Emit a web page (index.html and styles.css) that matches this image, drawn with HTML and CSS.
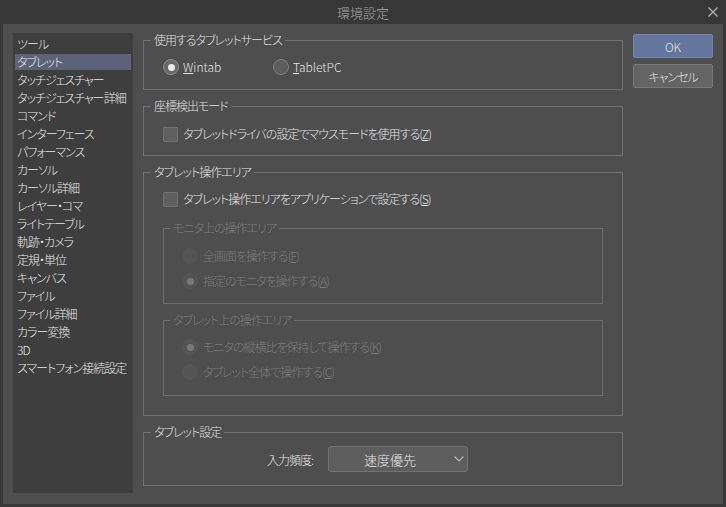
FILE: index.html
```html
<!DOCTYPE html>
<html lang="ja">
<head>
  <meta charset="UTF-8" />
  <title>環境設定</title>
  <link rel="stylesheet" href="styles.css">
</head>
<body>
  <div class="window">
    <div class="titlebar">
      <span class="title">環境設定</span>
      <svg class="close" width="10" height="10" viewBox="0 0 10 10">
        <path d="M0.5 0.5 L9.5 9.5 M9.5 0.5 L0.5 9.5" stroke="#b4b4b4" stroke-width="1.2" fill="none" />
      </svg>
    </div>

    <div class="main">
      <ul class="sidebar">
        <li>ツール</li>
        <li class="active">タブレット</li>
        <li>タッチジェスチャー</li>
        <li>タッチジェスチャー詳細</li>
        <li>コマンド</li>
        <li>インターフェース</li>
        <li>パフォーマンス</li>
        <li>カーソル</li>
        <li>カーソル詳細</li>
        <li>レイヤー・コマ</li>
        <li>ライトテーブル</li>
        <li>軌跡・カメラ</li>
        <li>定規・単位</li>
        <li>キャンバス</li>
        <li>ファイル</li>
        <li>ファイル詳細</li>
        <li>カラー変換</li>
        <li>3D</li>
        <li>スマートフォン接続設定</li>
      </ul>

      <div class="content">
        <div class="group g-service">
          <span class="legend">使用するタブレットサービス</span>
          <div class="row first">
            <label class="option"><span class="radio checked"></span><span class="latin"><u>W</u>intab</span></label>
            <label class="option"><span class="radio"></span><span class="latin"><u>T</u>abletPC</span></label>
          </div>
        </div>

        <div class="group g-mode">
          <span class="legend">座標検出モード</span>
          <div class="row first">
            <span class="check"></span>タブレットドライバの設定でマウスモードを使用する(<u>Z</u>)
          </div>
        </div>

        <div class="group g-area">
          <span class="legend">タブレット操作エリア</span>
          <div class="row first">
            <span class="check"></span>タブレット操作エリアをアプリケーションで設定する(<u>S</u>)
          </div>

          <div class="group sub disabled">
            <span class="legend">モニタ上の操作エリア</span>
            <div class="row first"><span class="radio"></span>全画面を操作する(<u>F</u>)</div>
            <div class="row"><span class="radio checked"></span>指定のモニタを操作する(<u>A</u>)</div>
          </div>

          <div class="group sub disabled last">
            <span class="legend">タブレット上の操作エリア</span>
            <div class="row first"><span class="radio checked"></span>モニタの縦横比を保持して操作する(<u>K</u>)</div>
            <div class="row"><span class="radio"></span>タブレット全体で操作する(<u>C</u>)</div>
          </div>
        </div>

        <div class="group g-settings">
          <span class="legend">タブレット設定</span>
          <div class="field">
            <span class="field-label">入力頻度:</span>
            <div class="select">
              <span class="select-value">速度優先</span>
              <svg class="chevron" width="10" height="6" viewBox="0 0 10 6">
                <path d="M0.5 0.5 L5 5 L9.5 0.5" stroke="#b8b8b8" stroke-width="1.1" fill="none" />
              </svg>
            </div>
          </div>
        </div>
      </div>

      <div class="actions">
        <button class="btn primary">OK</button>
        <button class="btn">キャンセル</button>
      </div>
    </div>
  </div>
</body>
</html>
```

FILE: styles.css
```css
body {
  margin: 0;
  background-color: #393939;
  font-family: "Noto Sans CJK JP", "Noto Sans", sans-serif;
  font-size: 12px;
  font-weight: 300;
  font-feature-settings: "palt";
  letter-spacing: -1px;
  color: #e4e4e4;
}
.window {
  width: 726px;
  height: 507px;
}
.titlebar {
  height: 24px;
  display: grid;
  grid-template-columns: 1fr auto 1fr;
  align-items: center;
  background-color: #373737;
  color: #a8a8a8;
}
.title {
  grid-column: 2;
  font-size: 13px;
  letter-spacing: 0;
}
.close {
  grid-column: 3;
  justify-self: end;
  margin-right: 8px;
}
.main {
  display: flex;
  gap: 10px;
  height: 480px;
  margin: 0 3px;
  padding: 9px 10px 0;
  box-sizing: border-box;
  background-color: #4e4e4e;
}
.sidebar {
  flex: none;
  width: 120px;
  height: 460px;
  margin: 0;
  padding: 3px 0 0;
  box-sizing: border-box;
  list-style: none;
  background-color: #3e3e3e;
  color: #e8e8e8;
}
.sidebar li {
  height: 16px;
  line-height: 16px;
  margin: 0 2px 2px;
  padding-left: 2px;
  white-space: nowrap;
}
.sidebar .active {
  background-color: #5c6379;
}
.content {
  flex: none;
  width: 480px;
  padding-top: 7px;
}
.group {
  border: 1px solid #717171;
}
.group + .group {
  margin-top: 16px;
}
.legend {
  display: block;
  width: fit-content;
  margin: -9px 0 0 7px;
  padding: 0 3px;
  line-height: 16px;
  background-color: #4e4e4e;
  color: #e0e0e0;
}
.row {
  display: flex;
  align-items: center;
  height: 16px;
  line-height: 16px;
  margin-top: 9px;
  padding-left: 19px;
  white-space: nowrap;
}
.row.first {
  margin-top: 11px;
}
.option {
  display: flex;
  align-items: center;
  width: 110px;
}
.latin {
  letter-spacing: 0;
}
.radio {
  flex: none;
  display: flex;
  align-items: center;
  justify-content: center;
  width: 16px;
  height: 16px;
  margin-right: 4px;
  box-sizing: border-box;
  border-radius: 50%;
  border: 1px solid #7e7e7e;
  background-color: #5d5d5d;
}
.radio.checked {
  border-color: #8e8e8e;
  background-color: #686868;
}
.radio.checked::after {
  content: "";
  width: 7px;
  height: 7px;
  border-radius: 50%;
  background-color: #ececec;
}
.check {
  flex: none;
  width: 15px;
  height: 15px;
  margin-right: 5px;
  box-sizing: border-box;
  border: 1px solid #717171;
  border-radius: 1px;
  background-color: #5f5f5f;
}
.g-service {
  padding-bottom: 14px;
}
.g-mode {
  padding-bottom: 13px;
}
.g-mode .row.first {
  margin-top: 12px;
}
.g-area {
  padding: 0 19px 19px 0;
}
.g-area > .row {
  margin-bottom: 21px;
}
.sub {
  margin-left: 19px;
  padding-bottom: 14px;
  border-color: #6c6c6c;
}
.sub.last {
  padding-bottom: 15px;
}
.sub .legend {
  margin-left: 6px;
}
.sub .row {
  padding-left: 18px;
}
.sub .row.first {
  margin-top: 12px;
}
.sub.last .row.first {
  margin-top: 11px;
}
.disabled .legend,
.disabled .row {
  color: #7b7b7b;
}
.disabled .radio {
  border-color: #565656;
  background-color: #545454;
}
.disabled .radio.checked::after {
  background-color: #787878;
}
.row .radio {
  margin-right: 5px;
}
.option .radio {
  margin-right: 4px;
}
.g-settings {
  padding-bottom: 13px;
}
.field {
  display: flex;
  align-items: center;
  margin-top: 6px;
}
.field-label {
  width: 169px;
  margin-right: 15px;
  text-align: right;
}
.select {
  display: grid;
  grid-template-columns: 122px 16px;
  align-items: center;
  width: 140px;
  height: 26px;
  box-sizing: border-box;
  border: 1px solid #727272;
  border-radius: 3px;
  background-color: #5e5e5e;
}
.select-value {
  text-align: center;
  font-size: 13px;
  letter-spacing: 0;
  color: #e6e6e6;
}
.chevron {
  justify-self: center;
}
.actions {
  flex: none;
  display: flex;
  flex-direction: column;
  gap: 6px;
  width: 80px;
  padding-top: 1px;
}
.btn {
  height: 24px;
  padding: 0;
  box-sizing: border-box;
  border: 1px solid #777;
  border-radius: 2px;
  background-color: #646464;
  color: #e2e2e2;
  font: inherit;
  font-feature-settings: "palt";
  letter-spacing: -1px;
}
.btn.primary {
  background-color: #64769e;
  border-color: #7384ab;
  letter-spacing: 0;
}
```
